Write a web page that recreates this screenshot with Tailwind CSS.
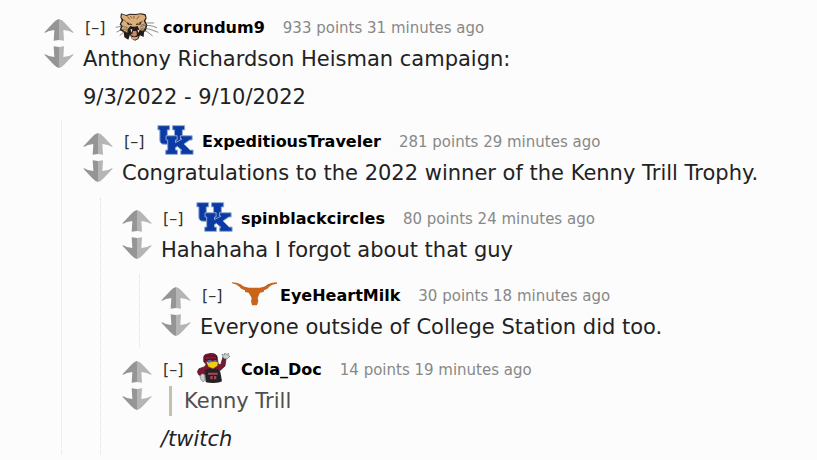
<!DOCTYPE html>
<html lang="en">
<head>
    <meta charset="UTF-8">
    <meta name="viewport" content="width=device-width, initial-scale=1.0">
    <title>Comments</title>
    <script src="https://cdn.jsdelivr.net/npm/@tailwindcss/browser@4"></script>
</head>
<body class="bg-[#fcfcfc] font-['Verdana','DejaVu_Sans',sans-serif] text-[#222]">

<!-- shared icons -->
<svg class="hidden" xmlns="http://www.w3.org/2000/svg">
    <symbol id="vote" viewBox="0 0 90 66">
        <path fill="#959595" d="M45 0Q36 2 28 11L2 39V42Q14 34 31 33L29 65L45 63Z"></path>
        <path fill="#b5b5b5" d="M45 0Q54 2 62 11L88 39V42Q76 34 58 33L60 65L45 63Z"></path>
    </symbol>
    <symbol id="uk" viewBox="0 0 112 92">
        <path fill="#0b3aa5" stroke="#8fa9cf" stroke-width="3" d="M2 2H38V15H31V42Q31 47 36 47H48Q53 47 53 42V15H47V2H84V15H77V46Q77 59 64 59H21Q8 59 8 46V15H2Z"></path>
        <path fill="#0b3aa5" stroke="#8fa9cf" stroke-width="3" d="M27 33H61V46H56V54L76 43H71V33H107V46H100L82 58L101 77H110V90H72V78H76L62 66L56 69V77H62V90H26V77H32V46H27Z"></path>
    </symbol>
</svg>

<main class="pt-3 pl-11 pr-4">
    <article>
        <div class="flex gap-[9px]">
            <div class="flex w-[30px] flex-none flex-col gap-[5px] pt-[7px]">
                <button type="button" aria-label="Upvote"><svg class="h-[22px] w-[30px]"><use href="#vote"></use></svg></button>
                <button type="button" aria-label="Downvote"><svg class="h-[22px] w-[30px] -scale-y-100"><use href="#vote"></use></svg></button>
            </div>
            <div class="min-w-0">
                <header class="flex h-8 items-center whitespace-nowrap text-[15px]">
                    <a href="#" class="w-8 flex-none pl-0.5 text-base text-[#333]">[–]</a>
                    <span class="w-12 flex-none">
                        <svg class="-mt-1 h-[29px] w-11" viewBox="15 12 132 87" role="img" aria-label="Wildcat">
                            <path fill="#241c19" d="M33 16L48 21L60 17L77 18L93 16L107 19L110 31L106 38L112 52L108 67L102 73L101 87L90 82L85 93L75 98L65 92L60 80L55 95L43 88L41 73L29 66L33 55L29 49L35 37L31 28Z"></path>
                            <path fill="#dcae78" d="M36 19L49 24L60 20L76 21L91 19L104 22L107 30L101 38L108 51L104 62L98 68L88 66L83 54L72 58L61 54L53 64L52 74L44 70L34 63L38 54L33 48L41 36L34 28Z"></path>
                            <path fill="none" stroke="#5a3d28" stroke-width="2" d="M52 25L59 34M61 24L66 31M88 24L80 34M42 36L49 42M98 39L91 43M72 24V32"></path>
                            <path fill="#241c19" d="M49 42L65 48L66 51L54 50ZM78 48L95 41L91 50L79 51ZM63 56H81L78 62H68ZM55 66L65 62L84 63L92 68L87 82L80 86L66 84Z"></path>
                            <path fill="#f5eedf" d="M56 45L63 49L58 49ZM81 49L89 45L87 49ZM61 64L67 64L65 74ZM83 65L89 67L84 75ZM63 81L68 83L66 77Z"></path>
                            <path fill="#c98a68" d="M69 69H79L81 81L73 86L66 82Z"></path>
                            <path fill="#dcae78" d="M62 85Q74 91 86 84L82 92L74 95L66 92Z"></path>
                            <path fill="none" stroke="#555" stroke-width="2" d="M53 59Q36 51 17 58M53 63Q37 61 20 72M54 66Q41 70 29 83M91 56Q113 47 141 59M91 60Q117 60 145 73M91 64Q112 67 128 84M93 52Q111 41 132 45"></path>
                        </svg>
                    </span>
                    <a href="#" class="text-base font-bold text-black">corundum9</a>
                    <span class="ml-[18px] text-[#888]">933 points 31 minutes ago</span>
                </header>
                <div class="space-y-2 text-[21px] leading-[30px]">
                    <p>Anthony Richardson Heisman campaign:</p>
                    <p>9/3/2022 - 9/10/2022</p>
                </div>
            </div>
        </div>

        <div class="mt-[9px] ml-[17px] border-l border-dotted border-[#ddf] pt-[5px] pl-[21px]">
            <article>
                <div class="flex gap-[9px]">
                    <div class="flex w-[30px] flex-none flex-col gap-[5px] pt-[7px]">
                        <button type="button" aria-label="Upvote"><svg class="h-[22px] w-[30px]"><use href="#vote"></use></svg></button>
                        <button type="button" aria-label="Downvote"><svg class="h-[22px] w-[30px] -scale-y-100"><use href="#vote"></use></svg></button>
                    </div>
                    <div class="min-w-0">
                        <header class="flex h-8 items-center whitespace-nowrap text-[15px]">
                            <a href="#" class="w-8 flex-none pl-0.5 text-base text-[#333]">[–]</a>
                            <span class="w-12 flex-none pl-[3px]"><svg class="-mt-1 h-[30px] w-[37px]" role="img" aria-label="Kentucky"><use href="#uk"></use></svg></span>
                            <a href="#" class="text-base font-bold text-black">ExpeditiousTraveler</a>
                            <span class="ml-[18px] text-[#888]">281 points 29 minutes ago</span>
                        </header>
                        <div class="text-[21px] leading-[30px]">
                            <p>Congratulations to the 2022 winner of the Kenny Trill Trophy.</p>
                        </div>
                    </div>
                </div>

                <div class="mt-[10px] ml-[17px] space-y-[7px] border-l border-dotted border-[#ddf] pt-[5px] pl-[21px]">
                    <article>
                        <div class="flex gap-[9px]">
                            <div class="flex w-[30px] flex-none flex-col gap-[5px] pt-[7px]">
                                <button type="button" aria-label="Upvote"><svg class="h-[22px] w-[30px]"><use href="#vote"></use></svg></button>
                                <button type="button" aria-label="Downvote"><svg class="h-[22px] w-[30px] -scale-y-100"><use href="#vote"></use></svg></button>
                            </div>
                            <div class="min-w-0">
                                <header class="flex h-8 items-center whitespace-nowrap text-[15px]">
                                    <a href="#" class="w-8 flex-none pl-0.5 text-base text-[#333]">[–]</a>
                                    <span class="w-12 flex-none pl-[3px]"><svg class="-mt-1 h-[30px] w-[37px]" role="img" aria-label="Kentucky"><use href="#uk"></use></svg></span>
                                    <a href="#" class="text-base font-bold text-black">spinblackcircles</a>
                                    <span class="ml-[18px] text-[#888]">80 points 24 minutes ago</span>
                                </header>
                                <div class="text-[21px] leading-[30px]">
                                    <p>Hahahaha I forgot about that guy</p>
                                </div>
                            </div>
                        </div>

                        <div class="mt-[10px] ml-[17px] border-l border-dotted border-[#ddf] pt-[5px] pb-[5px] pl-[21px]">
                            <article class="flex gap-[9px]">
                                <div class="flex w-[30px] flex-none flex-col gap-[5px] pt-[7px]">
                                    <button type="button" aria-label="Upvote"><svg class="h-[22px] w-[30px]"><use href="#vote"></use></svg></button>
                                    <button type="button" aria-label="Downvote"><svg class="h-[22px] w-[30px] -scale-y-100"><use href="#vote"></use></svg></button>
                                </div>
                                <div class="min-w-0">
                                    <header class="flex h-8 items-center whitespace-nowrap text-[15px]">
                                        <a href="#" class="w-8 flex-none pl-0.5 text-base text-[#333]">[–]</a>
                                        <span class="w-12 flex-none">
                                            <svg class="-mt-1 h-6 w-[45px]" viewBox="18 24 135 72" role="img" aria-label="Longhorn">
                                                <path fill="#c8651b" d="M18 25Q32 25 44 31Q55 41 69 41H101Q115 41 125 31Q138 25 153 25V29Q137 31 130 38Q123 48 114 49L113 54L102 56L97 67L95 73L97 81L93 94H78L75 81L77 73L74 67L68 56L57 54V49Q46 47 40 38Q33 30 18 28Z"></path>
                                            </svg>
                                        </span>
                                        <a href="#" class="text-base font-bold text-black">EyeHeartMilk</a>
                                        <span class="ml-[18px] text-[#888]">30 points 18 minutes ago</span>
                                    </header>
                                    <div class="text-[21px] leading-[30px]">
                                        <p>Everyone outside of College Station did too.</p>
                                    </div>
                                </div>
                            </article>
                        </div>
                    </article>

                    <article class="flex gap-[9px]">
                        <div class="flex w-[30px] flex-none flex-col gap-[5px] pt-[7px]">
                            <button type="button" aria-label="Upvote"><svg class="h-[22px] w-[30px]"><use href="#vote"></use></svg></button>
                            <button type="button" aria-label="Downvote"><svg class="h-[22px] w-[30px] -scale-y-100"><use href="#vote"></use></svg></button>
                        </div>
                        <div class="min-w-0">
                            <header class="flex h-8 items-center whitespace-nowrap text-[15px]">
                                <a href="#" class="w-8 flex-none pl-0.5 text-base text-[#333]">[–]</a>
                                <span class="w-12 flex-none pl-1">
                                    <svg class="-mt-1 h-[31px] w-[33px]" viewBox="21 11 99 93" role="img" aria-label="Gamecock">
                                        <path fill="#7b1734" stroke="#35101b" stroke-width="2" d="M41 27Q40 14 54 14L64 11L74 14Q83 17 82 28L85 45L92 46L99 23L108 29L105 50L92 62L87 66L91 97L50 98L47 72L37 82L26 76L22 67L27 58L44 52L48 45L41 37Z"></path>
                                        <path fill="#222126" d="M45 62L58 57L83 59L91 68L96 96Q77 105 47 98Z"></path>
                                        <path fill="#8f1738" stroke="#241018" stroke-width="2" d="M45 26Q48 17 61 20H79L81 30L62 29L45 32Z"></path>
                                        <path fill="#f6c912" stroke="#4b3514" stroke-width="1" d="M49 39L61 33L67 37L75 34L84 39L83 49L69 58L55 52Z"></path>
                                        <path fill="#3a78b1" d="M54 33H64V39L54 40ZM72 33H79V37H72Z"></path>
                                        <path fill="#cbcdd1" stroke="#55555b" stroke-width="1.5" d="M99 24L96 15L103 17L104 11L109 15L116 12L114 18L120 21L112 28L104 29ZM30 80Q36 68 44 77Q47 92 41 97Q32 96 30 80Z"></path>
                                        <path fill="#a5485a" d="M54 70H83V76H54ZM61 80H68V90H61ZM72 80H79V90H72Z"></path>
                                    </svg>
                                </span>
                                <a href="#" class="text-base font-bold text-black">Cola_Doc</a>
                                <span class="ml-[18px] text-[#888]">14 points 19 minutes ago</span>
                            </header>
                            <div class="space-y-2 text-[21px] leading-[30px]">
                                <blockquote class="ml-2 border-l-3 border-[#c5c1ad] pl-3 text-[#4f4f4f]">Kenny Trill</blockquote>
                                <p><em>/twitch</em></p>
                            </div>
                        </div>
                    </article>
                </div>
            </article>
        </div>
    </article>
</main>
</body>
</html>
